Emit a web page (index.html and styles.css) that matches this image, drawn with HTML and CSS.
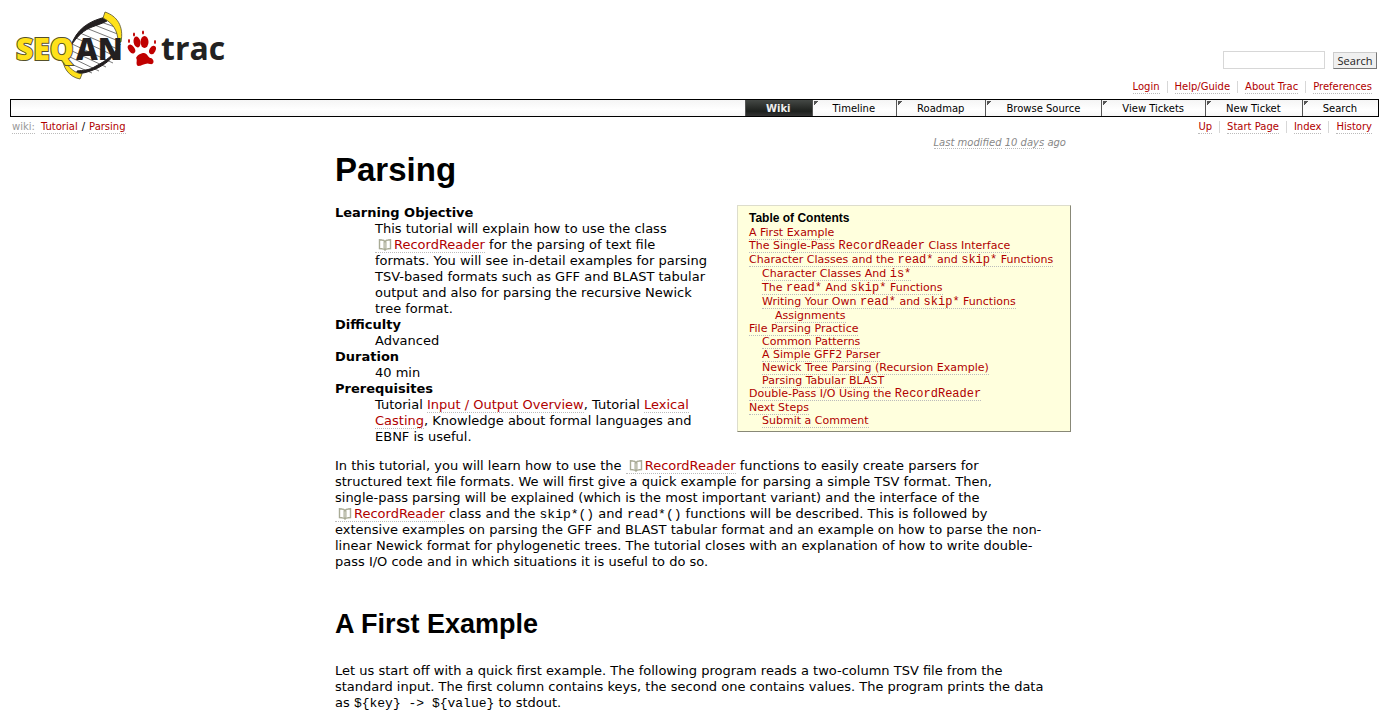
FILE: index.html
```html
<!DOCTYPE html>
<html lang="en">
<head>
<meta charset="utf-8">
<title>Parsing – SeqAn</title>
<link rel="stylesheet" href="styles.css">
</head>
<body>
<svg class="symbols" aria-hidden="true">
  <symbol id="book" viewBox="0 0 14 12">
    <path d="M7 11V3.500Q6.500 1 4 1L1.500 .8V9.500L4 9.700Q6.500 9.800 7 11Q7.500 9.800 10 9.700L12.500 9.500V.8L10 1Q7.500 1 7 3.500" fill="#fff" stroke="#a9ab96" stroke-width="1.400"/>
    <path d="M5.500 2.500V9M8.500 2.500V9" stroke="#d5d6ca"/>
  </symbol>
</svg>
<header class="banner">
  <a class="logo" href="#" aria-label="SeqAn trac">
    <svg width="220" height="80" viewBox="10 5 220 80">
      <path d="M105 17C86 20 73 33 71 52C70 67 75 75 82 77C101 72 121 62 121 42C121 28 114 21 105 17Z" fill="#fff"/>
      <path d="M98 21L118 28M92 24L120 35M86 28L121 42M80 33L120 50M76 38L117 57M72 44L113 63M70 50L106 67M70 57L99 71M71 64L92 73" stroke="#555" stroke-width=".8"/>
      <path d="M106 17C88 21 76 30 71 46C77 36 84 30 92 27C97 25 101 24 107 21Z" fill="#231f20" stroke="#231f20"/>
      <path d="M77 74C95 72 114 62 120 44C115 54 106 61 96 66C88 71 83 70 77 71Z" fill="#231f20" stroke="#231f20"/>
      <path d="M105 12C117 16 124 26 121 42L118 42C118 31 113 23 103 18Z" fill="#ffe11a" stroke="#55502a" stroke-width=".8"/>
      <path d="M66 57C65 64 70 68 74 71C77 73 79 73 82 74L80 79C69 77 62 67 63 57Z" fill="#ffe11a" stroke="#55502a" stroke-width=".8"/>
      <text class="logo-seq" x="16" y="60">SEQ</text>
      <text class="logo-an" x="76" y="60">AN</text>
      <g fill="#c00000">
        <ellipse cx="137" cy="42" rx="3.400" ry="5.500" transform="rotate(-12 137 42)"/>
        <ellipse cx="144.500" cy="42" rx="4" ry="6"/>
        <ellipse cx="131.500" cy="49" rx="3" ry="4.800" transform="rotate(-35 131.500 49)"/>
        <ellipse cx="152.500" cy="50" rx="3" ry="4.500" transform="rotate(28 152.500 50)"/>
        <path d="M143 53C147 52 148 58 151 58C155 60 154 65 150 64C146 62 142 66 138 66C135 64 138 60 136 58C138 54 140 54 143 53Z"/>
        <ellipse cx="129" cy="41" rx="1" ry="2"/>
        <ellipse cx="134" cy="34.500" rx="1" ry="2"/>
        <ellipse cx="143" cy="32.500" rx="1" ry="2"/>
        <ellipse cx="155" cy="42" rx="1" ry="2"/>
      </g>
      <text class="logo-trac" x="161" y="60">trac</text>
    </svg>
  </a>
  <div class="tools">
    <form class="search">
      <input type="text" aria-label="Search query">
      <button type="button">Search</button>
    </form>
    <ul class="links">
      <li><a href="#">Login</a></li><li><a href="#">Help/Guide</a></li><li><a href="#">About Trac</a></li><li><a href="#">Preferences</a></li>
    </ul>
  </div>
</header>
<nav class="mainnav">
  <a class="active" href="#">Wiki</a><a href="#">Timeline</a><a href="#">Roadmap</a><a href="#">Browse Source</a><a href="#">View Tickets</a><a href="#">New Ticket</a><a href="#">Search</a>
</nav>
<div class="subnav">
  <div class="path"><a class="muted" href="#">wiki:</a><a href="#">Tutorial</a><span>/</span><a href="#">Parsing</a></div>
  <ul class="links">
    <li><a href="#">Up</a></li><li><a href="#">Start Page</a></li><li><a href="#">Index</a></li><li><a href="#">History</a></li>
  </ul>
</div>
<main class="page">
  <p class="modified"><a href="#">Last modified</a> <a href="#">10 days</a> ago</p>
  <h1>Parsing</h1>
  <nav class="toc">
    <h4>Table of Contents</h4>
    <ol>
      <li><a href="#">A First Example</a></li>
      <li><a href="#">The Single-Pass <code>RecordReader</code> Class Interface</a></li>
      <li><a href="#">Character Classes and the <code>read*</code> and <code>skip*</code> Functions</a>
        <ol>
          <li><a href="#">Character Classes And <code>is*</code></a></li>
          <li><a href="#">The <code>read*</code> And <code>skip*</code> Functions</a></li>
          <li><a href="#">Writing Your Own <code>read*</code> and <code>skip*</code> Functions</a>
            <ol><li><a href="#">Assignments</a></li></ol>
          </li>
        </ol>
      </li>
      <li><a href="#">File Parsing Practice</a>
        <ol>
          <li><a href="#">Common Patterns</a></li>
          <li><a href="#">A Simple GFF2 Parser</a></li>
          <li><a href="#">Newick Tree Parsing (Recursion Example)</a></li>
          <li><a href="#">Parsing Tabular BLAST</a></li>
        </ol>
      </li>
      <li><a href="#">Double-Pass I/O Using the <code>RecordReader</code></a></li>
      <li><a href="#">Next Steps</a>
        <ol><li><a href="#">Submit a Comment</a></li></ol>
      </li>
    </ol>
  </nav>
  <dl>
    <dt>Learning Objective</dt>
    <dd>This tutorial will explain how to use the class<br><a class="ref" href="#"><svg class="book"><use href="#book"/></svg>RecordReader</a> for the parsing of text file<br>formats. You will see in-detail examples for parsing<br>TSV-based formats such as GFF and BLAST tabular<br>output and also for parsing the recursive Newick<br>tree format.</dd>
    <dt>Difficulty</dt>
    <dd>Advanced</dd>
    <dt>Duration</dt>
    <dd>40 min</dd>
    <dt>Prerequisites</dt>
    <dd>Tutorial <a href="#">Input / Output Overview</a>, Tutorial <a href="#">Lexical<br>Casting</a>, Knowledge about formal languages and<br>EBNF is useful.</dd>
  </dl>
  <p>In this tutorial, you will learn how to use the <a class="ref" href="#"><svg class="book"><use href="#book"/></svg>RecordReader</a> functions to easily create parsers for<br>structured text file formats. We will first give a quick example for parsing a simple TSV format. Then,<br>single-pass parsing will be explained (which is the most important variant) and the interface of the<br><a class="ref" href="#"><svg class="book"><use href="#book"/></svg>RecordReader</a> class and the <code>skip*()</code> and <code>read*()</code> functions will be described. This is followed by<br>extensive examples on parsing the GFF and BLAST tabular format and an example on how to parse the non-<br>linear Newick format for phylogenetic trees. The tutorial closes with an explanation of how to write double-<br>pass I/O code and in which situations it is useful to do so.</p>
  <h2>A First Example</h2>
  <p>Let us start off with a quick first example. The following program reads a two-column TSV file from the<br>standard input. The first column contains keys, the second one contains values. The program prints the data<br>as <code>${key} -&gt; ${value}</code> to stdout.</p>
</main>
</body>
</html>
```
FILE: styles.css
```css
* { box-sizing: border-box; }
body {
  margin: 0;
  padding: 5px 10px 0;
  background: #fff;
  color: #000;
  font: 13px/16px Verdana, "DejaVu Sans", sans-serif;
}
a { color: #b00000; text-decoration: none; border-bottom: 1px dotted #bbb; }
ul, ol { list-style: none; margin: 0; padding: 0; }
code { font-family: "Liberation Mono", monospace; font-size: 13px; line-height: 1; white-space: nowrap; }
.symbols { position: absolute; width: 0; height: 0; }

.banner { display: flex; justify-content: space-between; height: 94px; }
.logo { border: 0; }
.logo svg { display: block; }
.logo text { font-weight: 800; font-family: "Open Sans", sans-serif; }
.logo-seq { font-size: 30px; fill: #ffe11a; stroke: #55502a; stroke-width: 2px; paint-order: stroke; }
.logo-an { font-size: 30px; fill: #231f20; }
.logo .logo-trac { font-size: 32px; font-weight: 700; fill: #222; }
.tools { display: flex; flex-direction: column; align-items: flex-end; padding-top: 46px; }
.search { display: flex; gap: 8px; padding-right: 2px; }
.search input { width: 102px; height: 18px; border: 1px solid #d7d7d7; padding: 0 3px; font-size: 11px; }
.search button {
  width: 44px; height: 17px; padding: 0; margin-top: 1px;
  border: 1px solid #ccc; border-right-color: #777; border-bottom-color: #777;
  background: #f0f0f0; color: #222; font: 11px/14px "Open Sans", sans-serif;
}
.links { display: flex; font-size: 10px; line-height: 12px; }
.tools .links { margin-top: 12px; }
.links li { padding: 0 7px; border-left: 1px solid #d7d7d7; height: 12px; }
.links li:first-child { border-left: 0; }
.links a { display: block; height: 13px; }

.mainnav {
  display: flex; justify-content: flex-end; height: 18px;
  border: 1px solid #000;
  background: linear-gradient(#f5f5f5, #fff 60%, #f7f7f7);
  font-size: 10px; line-height: 17px;
}
.mainnav a {
  padding: 0 21px 0 20px; color: #000; border: 0; border-left: 1px solid #555;
  background: linear-gradient(135deg, #555 3px, transparent 3px) 1px 1px / 5px 5px no-repeat;
}
.mainnav a.active {
  color: #eee; font-weight: bold; border-color: #555;
  background: linear-gradient(#444845, #1d201d 70%, #333);
}
.subnav { display: flex; justify-content: space-between; padding: 4px 0 0; font-size: 10px; line-height: 12px; }
.path { display: flex; gap: 4px; padding-left: 2px; }
.path a { height: 13px; }
.path .muted { color: #999; margin-right: 2px; }

.page { max-width: 753px; margin: 0 auto; padding-left: 17px; }
.page > p { margin: 13px 0 0; }
.page > p.modified {
  margin: 3px 0 0; padding-right: 5px; text-align: right;
  color: #888; font-size: 10px; line-height: 12px; font-style: italic;
}
.modified a { color: #888; }
h1, h2, h4 { font-family: Arial, "Liberation Sans", sans-serif; font-weight: bold; margin: 0; }
h1 { font-size: 33px; line-height: 42px; padding-bottom: 14px; }
h2 { font-size: 27px; line-height: 32px; margin: 38px 0 23px; }
h4 { font-size: 12px; line-height: 15px; }
dl { margin: 0; }
dt { font-weight: bold; }
dd { margin: 0 0 0 40px; }
.ref { white-space: nowrap; }
.book { width: 14px; height: 12px; margin: 0 2px 0 3px; vertical-align: -2px; }

.toc {
  float: right; width: 334px; margin-left: 10px; padding: 5px 11px 4px;
  border: 1px solid #ddc; border-right-color: #887; border-bottom-color: #887;
  background: #ffffdd; font-size: 11px; line-height: 13px; white-space: nowrap;
}
.toc code { font-size: 12px; line-height: 14px; }
.toc ol ol { padding-left: 13px; }
```
